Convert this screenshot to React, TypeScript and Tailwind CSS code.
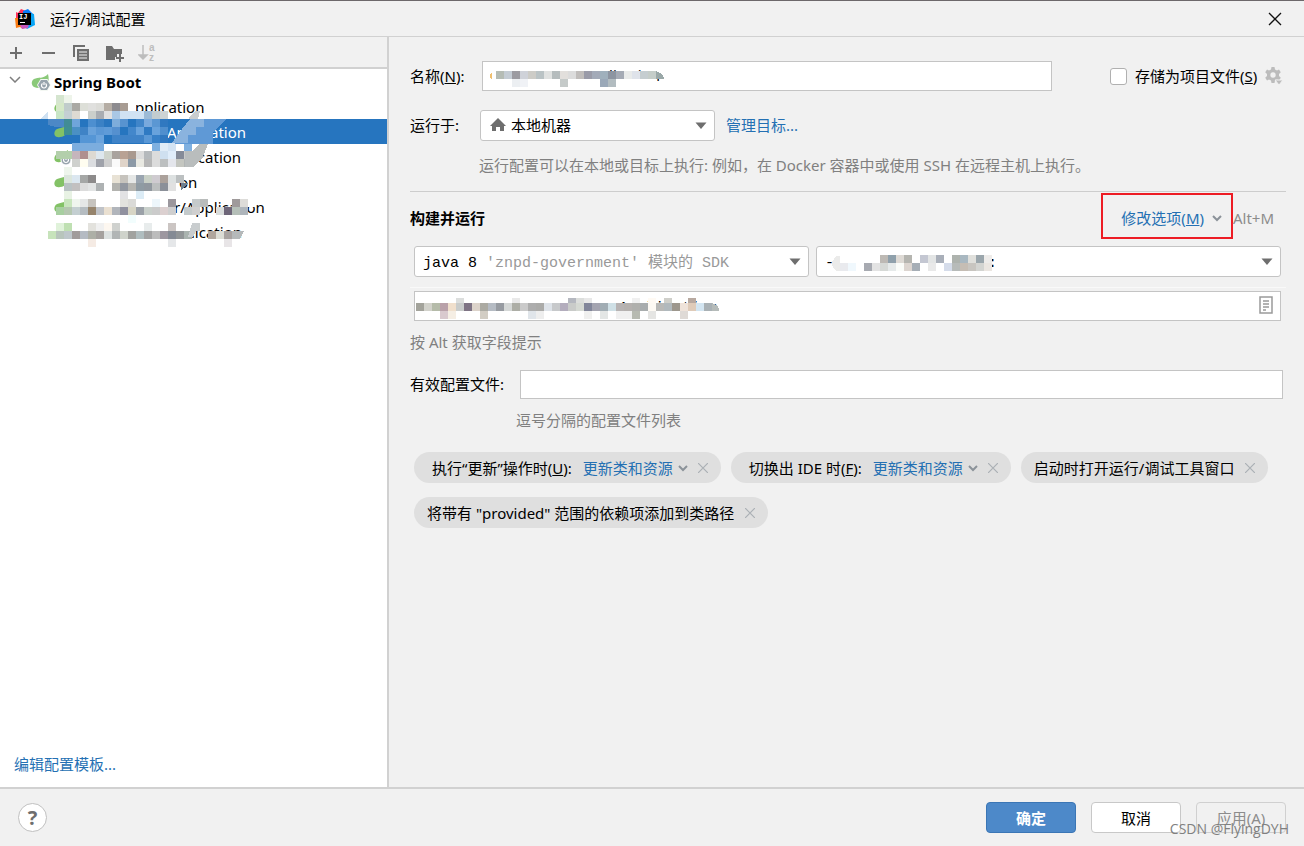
import { type ReactNode, useState } from "react";

type MosaicRow = [x: number, y: number, colors: string];

type TreeItem = {
  id: string;
  label: string;
  indent: string;
  icon: "badge" | "plain" | "none";
};

const treeItems: TreeItem[] = [
  { id: "first", label: "pplication", indent: "pl-[80px]", icon: "plain" },
  { id: "second", label: "Application", indent: "pl-[112px]", icon: "plain" },
  { id: "third", label: "ication", indent: "pl-[139px]", icon: "badge" },
  { id: "fourth", label: "on", indent: "pl-[124px]", icon: "plain" },
  { id: "fifth", label: "r/Application", indent: "pl-[119px]", icon: "plain" },
  { id: "sixth", label: "lication", indent: "pl-[136px]", icon: "none" },
];

// Each row is a start position and the colours of its 8px cells; "-" leaves a cell open.
const treeMosaic: MosaicRow[] = [
  [56, 95, "#d5e5cf #eef4ea"],
  [56, 103, "#d5e8c8 #c0cccb #aaa9a4 #dddfd8 #e0e0de #dcdcd8 #b5ada4 #8d8b8f #a89c93 #fff"],
  [56, 111, "#c8e5c5 #c4cfd3 #dedad3 #fff #cbcfcb #a9adb2 #e0e0e0 #a9c7e4 #d0e2f3 #d0e2f3 #d0e2f3 #9dbbd6 #c2cccf #cdd3d4"],
  [64, 119, "#418c95 #6fa5da #2675bf #4d8fd0 #3b81c5 #2a76bf #7eaddb #5793d0 #2675bf #4085c9 #79a9dd #5b97d3 #3078c0"],
  [64, 127, "#3f9092 #4a90c4 #3f83c6 #69a2db #5a97d5 #5f9bd8 #5590cf #2675bf #4387cb #68a2dc #2f7ac3 #68a2dc #508fce"],
  [72, 135, "#2675bf #5596d6 #5596d6 #6ba4dd #2675bf #3f83c8 #3f83c8 #3f83c8 #3f83c8 #5a98d6 #3780c8 #3078c0"],
  [72, 143, "#7cadde #7cadde #7cadde #7cadde - - - - - - #7fb0e0 #e0ecf7 #d3e3f3 - #7fb0e0"],
  [56, 151, "#b3cfab #b3cfab #c5b5bc #b08f8e #ddd9d2 #dee7ee #cfd4cc #a9a39e #b9a294 #a9998f #dcdcdc #b5b9bc #dcdcdc #cfe0f0 #e0edfa #858b98 #c9c9c9"],
  [72, 159, "#cfd1ce #fffdf0 #dbdde0 #9fa2aa #cecece #fafafa #e0d4c9 #8c99a6 #e9e9e2 #b7b7b7 #dcdcdc #bcbfc0 #e4e6ec #c4c6c0 #b1b5b5"],
  [64, 167, "#eef5ec"],
  [64, 175, "#dce6dd #dbe7f0 #a5a7a6 #8d8b8b - - #e8e2d5 #c6c3bd #e5e7e6 #9aa5b0 #c9d0c6 #cfcbd0 #aba19b #dde1e1 #bcc0c1"],
  [64, 183, "#b9c2c4 #c2c0c0 #dcdcdc #e2e4e4 #aeb2b3 - #b3b3af #9297a0 #b5b5b1 #8f9ba3 #91989f #bcbfbf #8b9099 #e1e1e1"],
  [64, 191, "#e8f2e4 - - - - - - #e2e2e4 - #dcecf6"],
  [64, 199, "#c8e5bd #eff5ee #e5e7e7 #c6c3be - - - #e2e2de #dadad7 - - #edf6fb - #9b979d - - #c5cacb #b9bcbb - - - #9f9a9b #dddcd9 #fff"],
  [56, 207, "#a7cfa0 #b5c7b0 #c4cfd1 #b5bcc1 #96846c #c0c3c8 #eae0d1 #b1b5bb #90919f #d7d5c5 #9ba1a8 #c9d0cb #cbcbcb #dcd0d0 #cfcfcf - #c4cacb #cfcfcf - - #d9dddc #6e6679 #b5bfb8 #aeb5bb"],
  [128, 215, "#f2fdfd"],
  [56, 223, "#e0f2da #bfe0b2 - - #e3e2dd #f0f0f0 #fdf7f0 #cfd1ce - - - #e8ecec - - #cbc5c3 - - #c9cdcd"],
  [48, 231, "#c7e3bb #b8c5bc #bec7cb #a19c9b #b5bbc3 #adafa6 #a5a19e #dde2e1 #b1b5b5 #cfd3cb #a1a29f #b0bdbf #a3a3a3 #bcbcbc #9d97a0 #848a94 #919597 #a9b3af - - #b0a69e #dcdcd5 #a9a3a1"],
  [88, 239, "#f5ebe4 - - - - - - - - - #e5e7e9 - - - - - - #e8e5e7"],
];

const nameMosaic: MosaicRow[] = [
  [496, 71, "#b5bcb5 #c4ccd4 #9c9ba1 #cfd2d9 #cdccc7 #bac3c5 #e0e2e1 #b5bcbd #e2dfdc #dcdcdc #c0bdbb #9a9ba8 #a3aab8 #9fb0bc #8d95a1 #a5abb5 #e9ebea #dfe3ea #c5cdd0 #c5cdc9"],
  [512, 79, "#eceff2 #f0f2f6 - - - - #c5cac9 - #fff #fff #fff #9aa8b8 #b2bcc0 #fff #fff #fff #fff #fff"],
];

const vmMosaic: MosaicRow[] = [
  [880, 255, "#bdb9b4 #8fa0ab #dedad5 #b5b5b0 #fff #c4c7d2 #e3e5e5 #a9afb9 #fff #aeb3ae #a9b8c1 #e0e0dc #9ba6ac #eeecea"],
  [840, 263, "#e9eaee #f0f8fd #fff #a7aab1 #e3e3e3 #d6d9d6 #e6eaea #fafcf9 #dcd5d0 #a6aeb6 #fff #e9e9e9 #fff #d5dcea #b7bbb9 #c5bdb4 #c8c5c0 #d3d4d1 #ebe6e1"],
];

const classMosaic: MosaicRow[] = [
  [456, 298, "#dcdedd - - - - - - #e9e9e9 - - - - - - #b5b8c0 #dcdedc #e8e8e8 - - - - - #f0f0f0 - #fffaf4 - #cfcfca - - #b8a9a0"],
  [416, 303, "#a3a39b #d2d2cb #b5bba9 #b9a1a9 #f0dfcc #c9cccb #7e7384 #dcd3ca #abaaa2 #b5bbc3 #979ba1 #d5d8d7 #adaea6 #cacaca #adadad #ababa9 #dee3e9 #c7c9cb #b3adbd #c9cbc9 #d5d9d3 #82869a #a4a4b0 #a1adb4 #cfe0e6 #b7b3b3 #b5b1af #b0b0ad #a9adae #fdf9f3 #b9b9b7 #b1b9bd #9d978d #efe3da #dfcbb9 #d3e5f1 #a9b1b5"],
  [440, 311, "#d9c9ce #f5eee4 - - - #d2cdc4 - - - - - #e0e5ea #eeeeee - - - - - #f0f0ef - #e3e6e5 #fff #f0f0f0 #f0f0f0 #b7bab1 #fff #e5e5e3 #fff #fff #fff #dfdad6 #fff #fff #fff #fff"],
];

function Mosaic({ rows, box, className, children }: { rows: MosaicRow[]; box: string; className: string; children?: ReactNode }) {
  return (
    <svg viewBox={box} className={`absolute pointer-events-none ${className}`} shapeRendering="crispEdges" aria-hidden="true">
      {rows.map(([x, y, colors]) =>
        colors.split(" ").map((color, index) =>
          color === "-" ? null : <rect key={`${x}-${y}-${index}`} x={x + index * 8} y={y} width="8" height="8" fill={color} />,
        ),
      )}
      {children}
    </svg>
  );
}

function IdeaLogo() {
  return (
    <svg viewBox="0 0 20 20" className="w-5 h-5" aria-hidden="true">
      <path d="M1 3 3 4 6 0l5 2-2 8-7 2-1-3z" fill="#fe315d" />
      <path d="M8 2 13 0l3 3 3 3-1 7-10-4z" fill="#087cfa" />
      <path d="M14 4 19 5l1 11-4 2-4 2-4-4z" fill="#07a4f5" />
      <path d="M0 9 5 9l5 8-2 3-3-2-4 1z" fill="#f97a12" />
      <path d="M5 16 14 15l-1 4-6 1z" fill="#c757bc" />
      <path d="M3 4h13v12H3z" fill="#000" />
      <text x="4" y="10" fontSize="7" fontWeight="700" fontFamily="Liberation Mono, monospace" fill="#fff">IJ</text>
      <path d="M5 13h5v1H5z" fill="#fff" />
    </svg>
  );
}

function SpringIcon() {
  return (
    <svg viewBox="0 0 20 18" className="w-5 h-[18px]" aria-hidden="true">
      <path d="M17 1c1 4 1 8-1 11-3 3-9 4-13 2C0 12 0 8 3 6c4-2 10 0 14-5z" fill="#8bc97a" />
      <path d="m9.500 6h7l3.500 6-3.500 6h-7L6 12z" fill="#f4f8f3" />
      <path d="m10 7h6l3 5-3 5h-6l-3-5z" fill="#98a4ad" />
      <path d="M11.500 10.500a2.500 2.500 0 1 0 3 0M13 9v3" fill="none" stroke="#fff" strokeWidth="1.200" />
    </svg>
  );
}

function LeafIcon({ badge }: { badge: boolean }) {
  return (
    <svg viewBox="0 0 20 18" className="w-5 h-[18px]" aria-hidden="true">
      <path d="M15 2c0 7-2 12-8 12-4 1-7-2-5-6 2-4 8-2 13-6z" fill="#83c266" />
      {badge && (
        <>
          <circle cx="13" cy="12" r="5" fill="#98a4ad" stroke="#fff" />
          <path d="M11.500 10a2.500 2.500 0 1 0 3 0M13 9v3" fill="none" stroke="#fff" strokeWidth="1.200" />
        </>
      )}
    </svg>
  );
}

function Triangle() {
  return (
    <svg viewBox="0 0 12 7" className="absolute right-2 top-3 w-3 h-[7px] pointer-events-none" aria-hidden="true">
      <path d="M0.500 0.500h11L6 7z" fill="#6e6e6e" />
    </svg>
  );
}

function Chevron() {
  return (
    <svg viewBox="0 0 10 7" className="w-[10px] h-[7px] mt-[2px]" aria-hidden="true">
      <path d="m1 1 4 4 4-4" fill="none" stroke="#8b9299" strokeWidth="2" />
    </svg>
  );
}

function Chip({ padding, label, mnemonic, link }: { padding: string; label: string; mnemonic?: string; link?: string }) {
  return (
    <div className={`flex items-center h-[31px] rounded-full bg-[#dfdfdf] pr-[13px] ${padding}`}>
      <span>
        {label}
        {mnemonic && (
          <>
            (<u>{mnemonic}</u>):
          </>
        )}
      </span>
      {link && (
        <button type="button" className="flex items-center gap-[5px] ml-[11px] text-[#2470b3]">
          {link}
          <Chevron />
        </button>
      )}
      <button type="button" aria-label={`${label} ×`} className={link ? "ml-[10px]" : "ml-[11px]"}>
        <svg viewBox="0 0 10 10" className="w-[10px] h-[10px] mt-px" aria-hidden="true">
          <path d="m0 0 10 10M10 0 0 10" stroke="#abb0b5" strokeWidth="1.200" />
        </svg>
      </button>
    </div>
  );
}

function Sidebar() {
  const [selected, setSelected] = useState("second");

  return (
    <aside className="flex flex-col w-[389px] shrink-0 bg-white border-r-2 border-[#d1d1d1]">
      <div className="flex items-center gap-[15px] h-8 pl-2 pt-px bg-[#f1f1f1] border-b-2 border-[#d1d1d1] text-[#6e6e6e]">
        <button type="button" aria-label="+">
          <svg viewBox="0 0 16 16" className="w-4 h-4">
            <path d="M8 2v12M2 8h12" stroke="currentColor" strokeWidth="2" />
          </svg>
        </button>
        <button type="button" aria-label="−" className="ml-[2px]">
          <svg viewBox="0 0 16 16" className="w-4 h-4">
            <path d="M1 8h13" stroke="currentColor" strokeWidth="2" />
          </svg>
        </button>
        <button type="button" aria-label="copy">
          <svg viewBox="0 0 18 18" className="w-[18px] h-[18px]">
            <path d="M1 13V1h12v2H3v10z" fill="currentColor" />
            <path d="M5 5h12v12H5z" fill="currentColor" />
            <path d="M7 8h8M7 11h8M7 14h8" stroke="#f1f1f1" />
          </svg>
        </button>
        <button type="button" aria-label="folder">
          <svg viewBox="0 0 20 18" className="w-5 h-[18px]">
            <path d="M1 2h6l2 3h8v5h-5v3h-2v3H1z" fill="currentColor" />
            <path d="M15 10v8M11 14h8" stroke="currentColor" strokeWidth="2" />
          </svg>
        </button>
        <button type="button" aria-label="sort" className="text-[#bdbdbd] -ml-[2px]">
          <svg viewBox="0 0 18 20" className="w-[18px] h-5">
            <path d="M5 2v12M1 12l4 4 4-4z" fill="currentColor" stroke="currentColor" strokeWidth="1.500" />
            <text x="11" y="8" fontSize="10" fontWeight="700" fontFamily="Liberation Sans, sans-serif" fill="currentColor">a</text>
            <text x="11" y="18" fontSize="10" fontWeight="700" fontFamily="Liberation Sans, sans-serif" fill="currentColor">z</text>
          </svg>
        </button>
      </div>

      <div className="relative">
        <div className="flex items-center h-[25px] pl-[9px] font-bold">
          <svg viewBox="0 0 12 7" className="w-3 h-[7px] mr-[10px] mb-1" aria-hidden="true">
            <path d="m1 1 5 5 5-5" fill="none" stroke="#7f7f7f" strokeWidth="1.500" />
          </svg>
          <SpringIcon />
          <span className="ml-[3px]">Spring Boot</span>
        </div>
        {treeItems.map((item) => (
          <button
            key={item.id}
            type="button"
            onClick={() => setSelected(item.id)}
            className={`flex items-center w-full h-[25px] ${selected === item.id ? "bg-[#2675bf] text-white" : "text-black"}`}
          >
            <span className="w-5 ml-[53px] -mr-[18px]">{item.icon !== "none" && <LeafIcon badge={item.icon === "badge"} />}</span>
            <span className={item.indent}>{item.label}</span>
          </button>
        ))}
        <Mosaic rows={treeMosaic} box="40 94 232 156" className="left-10 top-[25px] w-[232px] h-[156px]">
          <path d="M48 111v8h-8z" fill="#cfe1f2" />
          <path d="M48 119h16v8h-8l-8-2z" fill="#4c88c6" />
          <path d="M189 119v-2l7-6h4l-2 8z" fill="#c9cdcf" />
          <path d="M190 119h37l-14 13v12h-38z" fill="#5f99d6" />
          <path d="M190 119h14v8h-8v8h-8v8h-16l10-14z" fill="#8ab3de" />
          <path d="M193 151l6-7h9l-6 15-9 8h-8v-16z" fill="#b9bdbd" />
          <path d="M181 191v-8h7z" fill="#6d7f90" />
          <path d="M192 223h8l-7 14h-5z" fill="#c9cdcf" />
          <path d="M232 231h12l-4 8h-8z" fill="#b5b9ba" />
        </Mosaic>
      </div>

      <a href="#templates" className="mt-auto pl-[14px] pb-[13px] text-[#2470b3]">
        编辑配置模板...
      </a>
    </aside>
  );
}

function ConfigForm() {
  return (
    <main className="flex-1 min-w-0 pl-[21px] pr-[18px] pt-6">
      <div className="flex items-center">
        <label htmlFor="name" className="w-[72px] shrink-0 pb-px">
          名称(<u>N</u>):
        </label>
        <div className="relative flex-1 min-w-0 mr-[58px]">
          <input id="name" defaultValue="Application" className="block w-full h-[30px] pl-[98px] pb-[3px] bg-white border border-[#c4c4c4] outline-none" />
          <Mosaic rows={nameMosaic} box="488 62 184 28" className="left-[6px] top-px w-[184px] h-7">
            <path d="M492 72v8q-4-4 0-8z" fill="#f0c070" />
            <path d="M656 71q7 2 8 8h-8z" fill="#9aa8a8" />
          </Mosaic>
        </div>
        <div className="flex items-center w-44 shrink-0">
          <input id="store" type="checkbox" className="appearance-none w-[17px] h-[17px] bg-white border border-[#b0b0b0] rounded-[3px] checked:bg-[#4a88c7]" />
          <label htmlFor="store" className="ml-2">
            存储为项目文件(<u>S</u>)
          </label>
          <button type="button" aria-label="settings" className="ml-auto mr-[3px]">
            <svg viewBox="0 0 18 18" className="w-[18px] h-[18px]">
              <path d="M6.500 0h3l.5 2.500 2 1 2-1 1.800 2.800-1.800 1.700v2l1.800 1.700-1.800 2.700-2-.8-2 1-.5 2.400h-3L6 13.600l-2-1-2 .8L.2 10.700 2 9V7L.2 5.300 2 2.500l2 1 2-1zM8 5.300a2.700 2.700 0 1 0 0 5.400 2.700 2.700 0 0 0 0-5.400z" fill="#bcbcbc" fillRule="evenodd" />
              <path d="M10 13h8l-4 5z" fill="#bcbcbc" stroke="#f1f1f1" />
            </svg>
          </button>
        </div>
      </div>

      <div className="flex items-center mt-[19px]">
        <label htmlFor="target" className="w-[70px] shrink-0 pb-px">
          运行于:
        </label>
        <div className="relative w-[235px]">
          <select id="target" className="appearance-none block w-full h-[31px] pl-[30px] pb-px bg-white border border-[#c4c4c4] rounded-[3px] outline-none">
            <option>本地机器</option>
          </select>
          <svg viewBox="0 0 16 14" className="absolute left-[10px] top-2 w-4 h-[14px] pointer-events-none" aria-hidden="true">
            <path d="m8 0 8 8h-2v5h-4V9H6v4H2V8H0z" fill="#6e6e6e" />
          </svg>
          <Triangle />
        </div>
        <a href="#targets" className="ml-[11px] pb-px text-[#2470b3]">
          管理目标...
        </a>
      </div>
      <p className="mt-[14px] ml-[69px] text-[#808080]">运行配置可以在本地或目标上执行: 例如，在 Docker 容器中或使用 SSH 在远程主机上执行。</p>

      <hr className="mt-4 border-[#cdcdcd]" />

      <div className="flex items-center mt-px">
        <h2 className="pt-[3px] font-bold">构建并运行</h2>
        <button type="button" className="flex items-center justify-end gap-2 w-[132px] h-[46px] ml-auto pt-[3px] pr-[9px] border-2 border-[#ed1c24] text-[#2470b3]">
          <span>
            修改选项(<u>M</u>)
          </span>
          <Chevron />
        </button>
        <span className="w-[53px] pt-[3px] text-[#8c8c8c]">Alt+M</span>
      </div>

      <div className="flex gap-[7px] mt-[7px] ml-1 mr-[5px] font-['Liberation_Mono','Noto_Sans_CJK_SC',monospace]">
        <div className="relative w-[395px] shrink-0">
          <select aria-label="SDK" className="appearance-none block w-full h-[31px] pl-2 pt-[5px] bg-white border border-[#c4c4c4] rounded-[3px] outline-none">
            <option>java 8</option>
          </select>
          <span className="absolute left-[72px] top-2 text-[#999999] pointer-events-none">'znpd-government' 模块的 SDK</span>
          <Triangle />
        </div>
        <div className="relative flex-1 min-w-0">
          <select aria-label="module" className="appearance-none block w-full h-[31px] pl-2 pt-[5px] bg-white border border-[#c4c4c4] rounded-[3px] outline-none">
            <option>-</option>
          </select>
          <span className="absolute left-[172px] top-2 pointer-events-none">:</span>
          <Mosaic rows={vmMosaic} box="824 247 176 29" className="left-2 top-px w-44 h-[29px]">
            <path d="M840 256v15h-3q-10-7 0-15z" fill="#ebebea" />
          </Mosaic>
          <Triangle />
        </div>
      </div>

      <hr className="mt-[10px] border-[#f9f9f9]" />

      <div className="relative mt-[3px] ml-1 mr-[5px]">
        <input aria-label="class" defaultValue="Application" className="block w-full h-[30px] pl-[204px] pt-[5px] bg-white border border-[#c4c4c4] outline-none font-['Liberation_Mono',monospace]" />
        <Mosaic rows={classMosaic} box="414 292 310 28" className="left-0 top-px w-[310px] h-7">
          <path d="M712 303q7 2 7 8h-7z" fill="#b5bbb9" />
        </Mosaic>
        <svg viewBox="0 0 14 18" className="absolute right-2 top-[5px] w-[14px] h-[18px]" aria-hidden="true">
          <path d="M1 1h12v16H1zM4 5h6M4 8h6M4 11h6M4 14h3" fill="none" stroke="#9a9a9a" strokeWidth="1.500" />
        </svg>
      </div>
      <p className="mt-[11px] text-[#808080]">按 Alt 获取字段提示</p>

      <div className="flex items-center mt-[18px] mr-[3px]">
        <label htmlFor="profiles" className="w-[110px] shrink-0 pb-px">
          有效配置文件:
        </label>
        <input id="profiles" className="flex-1 min-w-0 h-[29px] px-2 bg-white border border-[#c4c4c4] outline-none" />
      </div>
      <p className="mt-[11px] ml-[106px] text-[#808080]">逗号分隔的配置文件列表</p>

      <div className="flex flex-wrap gap-x-[10px] gap-y-[14px] mt-[22px] ml-1">
        <Chip padding="pl-[18px]" label="执行“更新”操作时" mnemonic="U" link="更新类和资源" />
        <Chip padding="pl-[18px]" label="切换出 IDE 时" mnemonic="F" link="更新类和资源" />
        <Chip padding="pl-[13px]" label="启动时打开运行/调试工具窗口" />
        <Chip padding="pl-[13px]" label={'将带有 "provided" 范围的依赖项添加到类路径'} />
      </div>
    </main>
  );
}

export default function App() {
  return (
    <div className="relative flex flex-col min-h-screen bg-[#f1f1f1] border-t border-[#6d686b] text-[15px] leading-5 text-black font-['Noto_Sans','Noto_Sans_CJK_SC',sans-serif]">
      <header className="flex items-center h-9 pl-[15px] pr-[22px] border-b border-[#d1d1d1]">
        <IdeaLogo />
        <h1 className="ml-[15px]">运行/调试配置</h1>
        <button type="button" aria-label="close" className="ml-auto">
          <svg viewBox="0 0 14 14" className="w-[14px] h-[14px]">
            <path d="m1 1 12 12M13 1 1 13" stroke="#111" strokeWidth="1.300" />
          </svg>
        </button>
      </header>

      <div className="flex flex-1">
        <Sidebar />
        <ConfigForm />
      </div>

      <footer className="flex items-center gap-[15px] h-[59px] pl-[18px] pr-[18px] border-t-2 border-[#d1d1d1]">
        <button type="button" className="w-[29px] h-[29px] mr-auto rounded-full bg-white border border-[#c0c0c0] text-xl font-bold text-[#6e6e6e]">
          ?
        </button>
        <button type="button" className="w-[90px] h-[31px] rounded-[4px] bg-[#4d89c9] border border-[#3b76b5] font-bold text-white">确定</button>
        <button type="button" className="w-[90px] h-[31px] rounded-[4px] bg-white border border-[#c8c8c8]">取消</button>
        <button type="button" disabled className="w-[90px] h-[31px] rounded-[4px] border border-[#d0d0d0] text-[#8c8c8c]">应用(A)</button>
      </footer>

      <span className="absolute right-[15px] bottom-[7px] text-[14px] text-[#808080] font-['Open_Sans',sans-serif] pointer-events-none">CSDN @FlyingDYH</span>
    </div>
  );
}
